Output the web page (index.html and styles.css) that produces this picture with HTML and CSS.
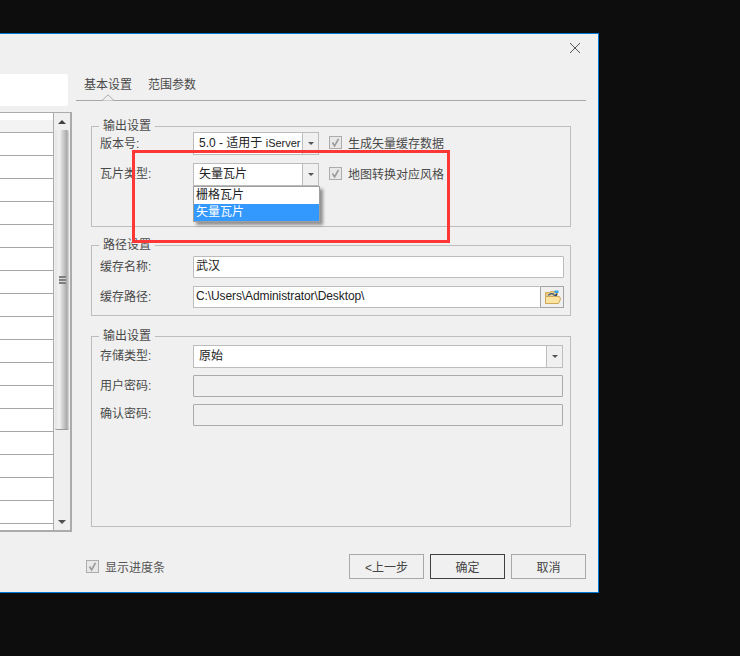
FILE: index.html
```html
<!DOCTYPE html>
<html lang="zh">
<head>
<meta charset="utf-8">
<title>生成缓存</title>
<link rel="stylesheet" href="styles.css">
</head>
<body>
<div class="dialog">
  <div class="titlebar">
    <svg class="close" width="12" height="12" viewBox="0 0 12 12"><path d="M1 1L11 11M11 1L1 11" stroke="#555" stroke-width="1" fill="none"/></svg>
  </div>
  <div class="main">
    <div class="left">
      <div class="white-panel"></div>
      <div class="list">
        <div class="table">
          <div class="thead"></div>
          <div class="trow"></div><div class="trow"></div><div class="trow"></div><div class="trow"></div>
          <div class="trow"></div><div class="trow"></div><div class="trow"></div><div class="trow"></div>
          <div class="trow"></div><div class="trow"></div><div class="trow"></div><div class="trow"></div>
          <div class="trow"></div><div class="trow"></div><div class="trow"></div><div class="trow"></div>
          <div class="trow"></div><div class="trow"></div>
        </div>
        <div class="scrollbar">
          <div class="sb-btn"><span class="tri-up"></span></div>
          <div class="sb-thumb"><span class="grip"></span></div>
          <div class="sb-track"></div>
          <div class="sb-btn"><span class="tri-down"></span></div>
        </div>
      </div>
    </div>
    <div class="right">
      <div class="tabs">
        <span class="tab">基本设置</span>
        <span class="tab">范围参数</span>
        <svg class="notch" width="14" height="7" viewBox="0 0 14 7"><path d="M0 6.5H1L7 .8L13 6.5H14" stroke="#a8a8a8" fill="#f0f0f0"/></svg>
      </div>
      <section class="group group-a">
        <div class="legend">输出设置</div>
        <div class="row row-a">
          <label class="label label-low">版本号:</label>
          <div class="combo"><span class="value">5.0 - 适用于 <span class="latin">iServer</span></span><span class="arrow"><i></i></span></div>
          <div class="check"><span class="box"><svg width="11" height="11" viewBox="0 0 11 11"><path d="M2.5 5.5L4.6 9L8.5 1.8" stroke="#9a9a9a" stroke-width="1.6" fill="none"/></svg></span>生成矢量缓存数据</div>
        </div>
        <div class="row row-a">
          <label class="label">瓦片类型:</label>
          <div class="combo combo-open">
            <span class="value">矢量瓦片</span><span class="arrow"><i></i></span>
            <div class="dropdown">
              <div class="option">栅格瓦片</div>
              <div class="option selected">矢量瓦片</div>
            </div>
          </div>
          <div class="check"><span class="box"><svg width="11" height="11" viewBox="0 0 11 11"><path d="M2.5 5.5L4.6 9L8.5 1.8" stroke="#9a9a9a" stroke-width="1.6" fill="none"/></svg></span>地图转换对应风格</div>
        </div>
      </section>
      <section class="group group-b">
        <div class="legend">路径设置</div>
        <div class="row row-b">
          <label class="label">缓存名称:</label>
          <div class="input name-input">武汉</div>
        </div>
        <div class="row row-b">
          <label class="label">缓存路径:</label>
          <div class="path">
            <div class="input path-input">C:\Users\Administrator\Desktop\</div>
            <div class="folder-btn">
              <svg width="17" height="15" viewBox="0 0 17 15">
                <path d="M1.5 13.5V2.5H5.5L6.5 1.5H13.5V5H1.5Z" fill="#f2d488" stroke="#cfa95a"/>
                <path d="M10.5 .5H14.5V3H10.5Z" fill="#39a3ea"/>
                <path d="M1.5 13.5V6.5H15.5L16.5 9L14.5 13.5Z" fill="#fae2a0" stroke="#cfa95a"/>
                <path d="M4.5 5.5C5.5 3.5 8.5 3 10 4.5" stroke="#33527f" stroke-width="1.2" fill="none"/>
                <path d="M9 6H13V3Z" fill="#33527f"/>
              </svg>
            </div>
          </div>
        </div>
      </section>
      <section class="group group-c">
        <div class="legend">输出设置</div>
        <div class="row row-c">
          <label class="label">存储类型:</label>
          <div class="combo combo-wide"><span class="value">原始</span><span class="arrow"><i></i></span></div>
        </div>
        <div class="row row-c">
          <label class="label">用户密码:</label>
          <div class="input input-disabled"></div>
        </div>
        <div class="row row-c">
          <label class="label label-high">确认密码:</label>
          <div class="input input-disabled"></div>
        </div>
      </section>
    </div>
  </div>
  <div class="footer">
    <div class="check check-footer"><span class="box"><svg width="11" height="11" viewBox="0 0 11 11"><path d="M2.5 5.5L4.6 9L8.5 1.8" stroke="#9a9a9a" stroke-width="1.6" fill="none"/></svg></span>显示进度条</div>
    <div class="buttons">
      <div class="btn">&lt;上一步</div>
      <div class="btn btn-default">确定</div>
      <div class="btn">取消</div>
    </div>
  </div>
  <div class="annotation"></div>
</div>
</body>
</html>
```
FILE: styles.css
```css
* { box-sizing: border-box; }
html, body { margin: 0; height: 100%; }
body {
  background: #0d0d0d;
  font-family: "Liberation Sans", "Noto Sans CJK SC", sans-serif;
  font-size: 12px;
  color: #4a4a4a;
  overflow: hidden;
}
.dialog {
  position: absolute;
  left: 0;
  top: 33px;
  width: 599px;
  height: 560px;
  background: #f0f0f0;
  border: 1px solid #0078d7;
  border-left: 0;
}
.titlebar {
  height: 40px;
  display: flex;
  justify-content: flex-end;
  align-items: flex-start;
  padding: 8px 17px 0 0;
}
.main { display: flex; height: 458px; }
.left { width: 72px; display: flex; flex-direction: column; }
.white-panel { width: 68px; height: 32px; background: #fff; border-radius: 0 2px 2px 0; }
.list {
  margin-top: 6px;
  height: 420px;
  display: flex;
  border: 1px solid #ababab;
  border-left: 0;
  border-bottom-width: 2px;
  border-right-width: 2px;
}
.table { width: 54px; background: #fff; border-right: 1px solid #ababab; overflow: hidden; }
.thead { height: 20px; background: linear-gradient(#fff 37%, #f3f3f3 37%); border-bottom: 1px solid #ababab; }
.trow { height: 23px; border-bottom: 1px solid #a6a6a6; }
.scrollbar { flex: 1; display: flex; flex-direction: column; background: #efefef; }
.sb-btn { height: 17px; display: flex; align-items: center; justify-content: center; flex: none; }
.tri-up { border: 4px solid transparent; border-top: 0; border-bottom: 4px solid #404040; }
.tri-down { border: 4px solid transparent; border-bottom: 0; border-top: 4px solid #505050; }
.sb-thumb {
  height: 300px;
  margin: 0 1px;
  display: flex;
  align-items: center;
  justify-content: center;
  background: linear-gradient(90deg, #e4e4e4, #f2f2f2 30%, #a9a9a9 85%, #dcdcdc);
  border-bottom: 1px solid #9a9a9a;
  border-radius: 2px;
}
.grip {
  width: 7px;
  height: 8px;
  background: repeating-linear-gradient(#808080 0 2px, #d8d8d8 2px 3px);
}
.sb-track { flex: 1; }
.right { width: 510px; margin-left: 4px; display: flex; flex-direction: column; }
.tabs {
  position: relative;
  height: 27px;
  border-bottom: 1px solid #a8a8a8;
  display: flex;
  gap: 16px;
  padding: 2px 0 0 8px;
  line-height: 18px;
}
.notch { position: absolute; left: 25px; bottom: -1px; }
.group { margin-left: 15px; width: 480px; border: 1px solid #bdbdbd; padding-left: 8px; }
.group-a { margin-top: 25px; height: 101px; }
.group-b { margin-top: 18px; height: 71px; }
.group-c { margin-top: 20px; height: 191px; }
.legend {
  width: fit-content;
  height: 14px;
  line-height: 14px;
  margin: -8px 0 0 -1px;
  padding: 0 4px;
  background: #f0f0f0;
}
.group-a .legend { margin-bottom: -1px; }
.group-b .legend { margin-bottom: 4px; }
.group-c .legend { margin-bottom: 2px; }
.row { display: flex; align-items: center; }
.row-a { height: 23px; margin-bottom: 8px; }
.row-b { height: 22px; margin-bottom: 8px; }
.row-c { height: 23px; margin-bottom: 7px; }
.row-c + .row-c { height: 22px; }
.label { width: 93px; padding-bottom: 4px; flex: none; }
.label-low { padding-bottom: 2px; }
.label-high { padding-bottom: 6px; }
.combo {
  position: relative;
  width: 126px;
  height: 23px;
  display: flex;
  border: 1px solid #bcbcbc;
  background: #fff;
  color: #222;
  line-height: 20px;
}
.combo-wide { width: 370px; }
.value { flex: 1; padding-left: 5px; white-space: nowrap; }
.latin { font-size: 11px; }
.arrow {
  width: 16px;
  background: #f0f0f0;
  border-left: 1px solid #bcbcbc;
  display: flex;
  align-items: center;
  justify-content: center;
  flex: none;
}
.arrow i { border: 3px solid transparent; border-bottom: 0; border-top: 3px solid #555; }
.dropdown {
  position: absolute;
  left: -1px;
  top: 22px;
  width: 127px;
  height: 36px;
  background: #fff;
  border: 1px solid #9f9f9f;
  box-shadow: 3px 3px 3px rgba(0,0,0,.4);
  z-index: 2;
  line-height: 16px;
}
.option { height: 17px; padding-left: 2px; color: #222; }
.selected { background: #3399ff; color: #fff; }
.check { display: flex; align-items: center; gap: 6px; margin-left: 10px; white-space: nowrap; padding-bottom: 2px; }
.box {
  width: 13px;
  height: 13px;
  border: 1px solid #acacac;
  background: #e8e8e8;
  display: flex;
  align-items: center;
  justify-content: center;
  flex: none;
}
.input {
  height: 22px;
  border: 1px solid #bcbcbc;
  background: #fff;
  color: #222;
  line-height: 18px;
  padding-left: 2px;
  border-radius: 1px;
}
.name-input { width: 371px; }
.path { display: flex; width: 371px; }
.path-input { flex: 1; border-right: 0; letter-spacing: -0.1px; }
.folder-btn {
  width: 24px;
  height: 22px;
  border: 1px solid #a5a5a5;
  display: flex;
  align-items: center;
  justify-content: center;
  flex: none;
}
.input-disabled { width: 370px; background: #f0f0f0; border-color: #ababab; }
.footer {
  margin-top: 22px;
  height: 25px;
  display: flex;
  justify-content: space-between;
  padding: 0 12px 0 86px;
}
.check-footer { margin-left: 0; padding-bottom: 0; color: #555; }
.buttons { display: flex; gap: 6px; }
.btn {
  width: 75px;
  height: 25px;
  border: 1px solid #a8a8a8;
  display: flex;
  align-items: center;
  justify-content: center;
  color: #444;
}
.btn-default { border-color: #3f3f3f; }
.annotation {
  position: absolute;
  left: 132px;
  top: 116px;
  width: 318px;
  height: 93px;
  border: 3px solid #ff3636;
  z-index: 3;
  pointer-events: none;
}
```
